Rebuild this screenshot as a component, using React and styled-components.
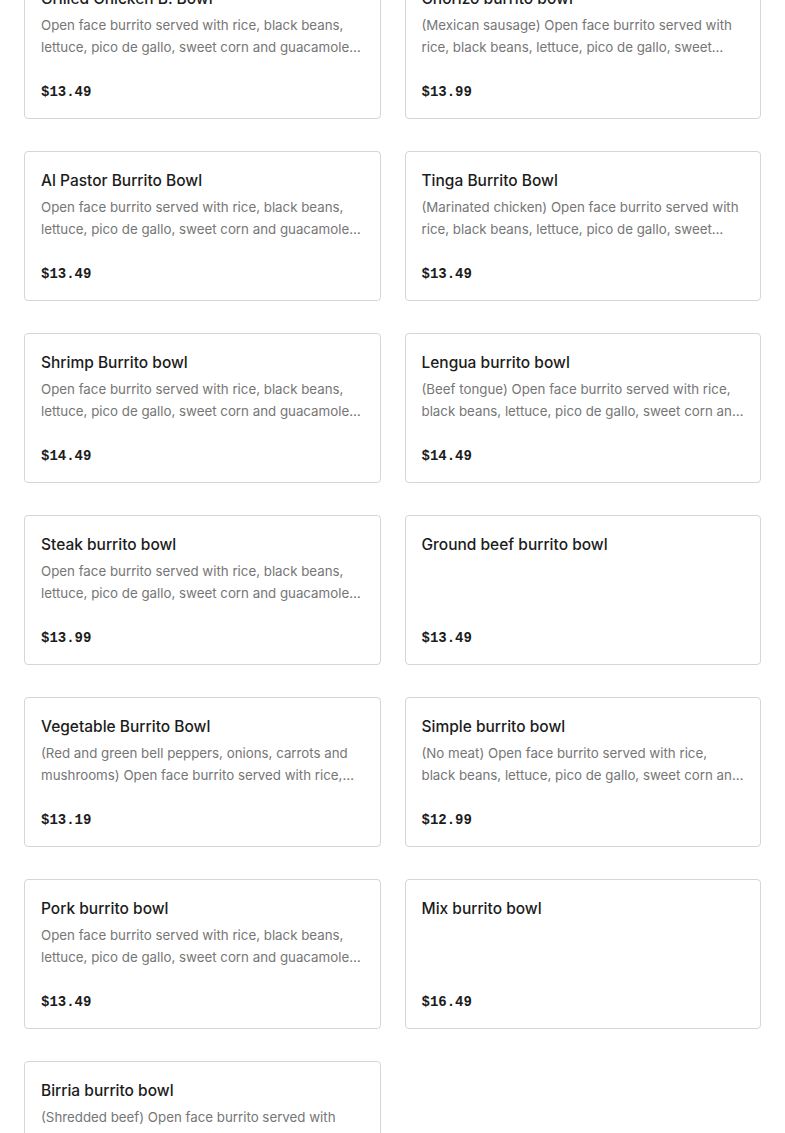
import React from 'react'
import styled, { createGlobalStyle } from 'styled-components'

const GlobalStyle = createGlobalStyle`
  body {
    margin: 0;
    background: #ffffff;
    font-family: Inter, "Liberation Sans", Arial, sans-serif;
  }
`

const Page = styled.div`
  padding: 0 24px;
  overflow: hidden;
  height: 1133px;
`

const Grid = styled.div`
  display: grid;
  grid-template-columns: 1fr 1fr;
  column-gap: 24px;
  row-gap: 32px;
  margin-top: -31px;
`

const Card = styled.div`
  box-sizing: border-box;
  height: 150px;
  border: 1px solid #d6d6d6;
  border-radius: 4px;
  padding: 17px 16px 16px 16px;
  display: flex;
  flex-direction: column;
`

const Title = styled.div`
  font-size: 15.5px;
  line-height: 24px;
  font-weight: 500;
  color: #1c1c1c;
`

const Desc = styled.div`
  margin-top: 3px;
  font-size: 13.3px;
  line-height: 22px;
  color: #767676;
  display: -webkit-box;
  -webkit-line-clamp: 2;
  -webkit-box-orient: vertical;
  overflow: hidden;
`

const Price = styled.div`
  margin-top: auto;
  font-family: "Liberation Mono", "Courier New", monospace;
  font-weight: 700;
  font-size: 14px;
  line-height: 20px;
  color: #1c1c1c;
`

const base = 'Open face burrito served with rice, black beans, lettuce, pico de gallo, sweet corn and guacamole. Topped with sour cream and cheese'

const items = [
  { name: 'Grilled Chicken B. Bowl', desc: base, price: '$13.49' },
  { name: 'Chorizo burrito bowl', desc: '(Mexican sausage) ' + base, price: '$13.99' },
  { name: 'Al Pastor Burrito Bowl', desc: base, price: '$13.49' },
  { name: 'Tinga Burrito Bowl', desc: '(Marinated chicken) ' + base, price: '$13.49' },
  { name: 'Shrimp Burrito bowl', desc: base, price: '$14.49' },
  { name: 'Lengua burrito bowl', desc: '(Beef tongue) ' + base, price: '$14.49' },
  { name: 'Steak burrito bowl', desc: base, price: '$13.99' },
  { name: 'Ground beef burrito bowl', desc: '', price: '$13.49' },
  { name: 'Vegetable Burrito Bowl', desc: '(Red and green bell peppers, onions, carrots and mushrooms) ' + base, price: '$13.19' },
  { name: 'Simple burrito bowl', desc: '(No meat) ' + base, price: '$12.99' },
  { name: 'Pork burrito bowl', desc: base, price: '$13.49' },
  { name: 'Mix burrito bowl', desc: '', price: '$16.49' },
  { name: 'Birria burrito bowl', desc: '(Shredded beef) ' + base, price: '$15.49' }
]

const App = () => (
  <Page>
    <GlobalStyle />
    <Grid>
      {items.map(item => (
        <Card key={item.name}>
          <Title>{item.name}</Title>
          {item.desc && <Desc>{item.desc}</Desc>}
          <Price>{item.price}</Price>
        </Card>
      ))}
    </Grid>
  </Page>
)

export default App
